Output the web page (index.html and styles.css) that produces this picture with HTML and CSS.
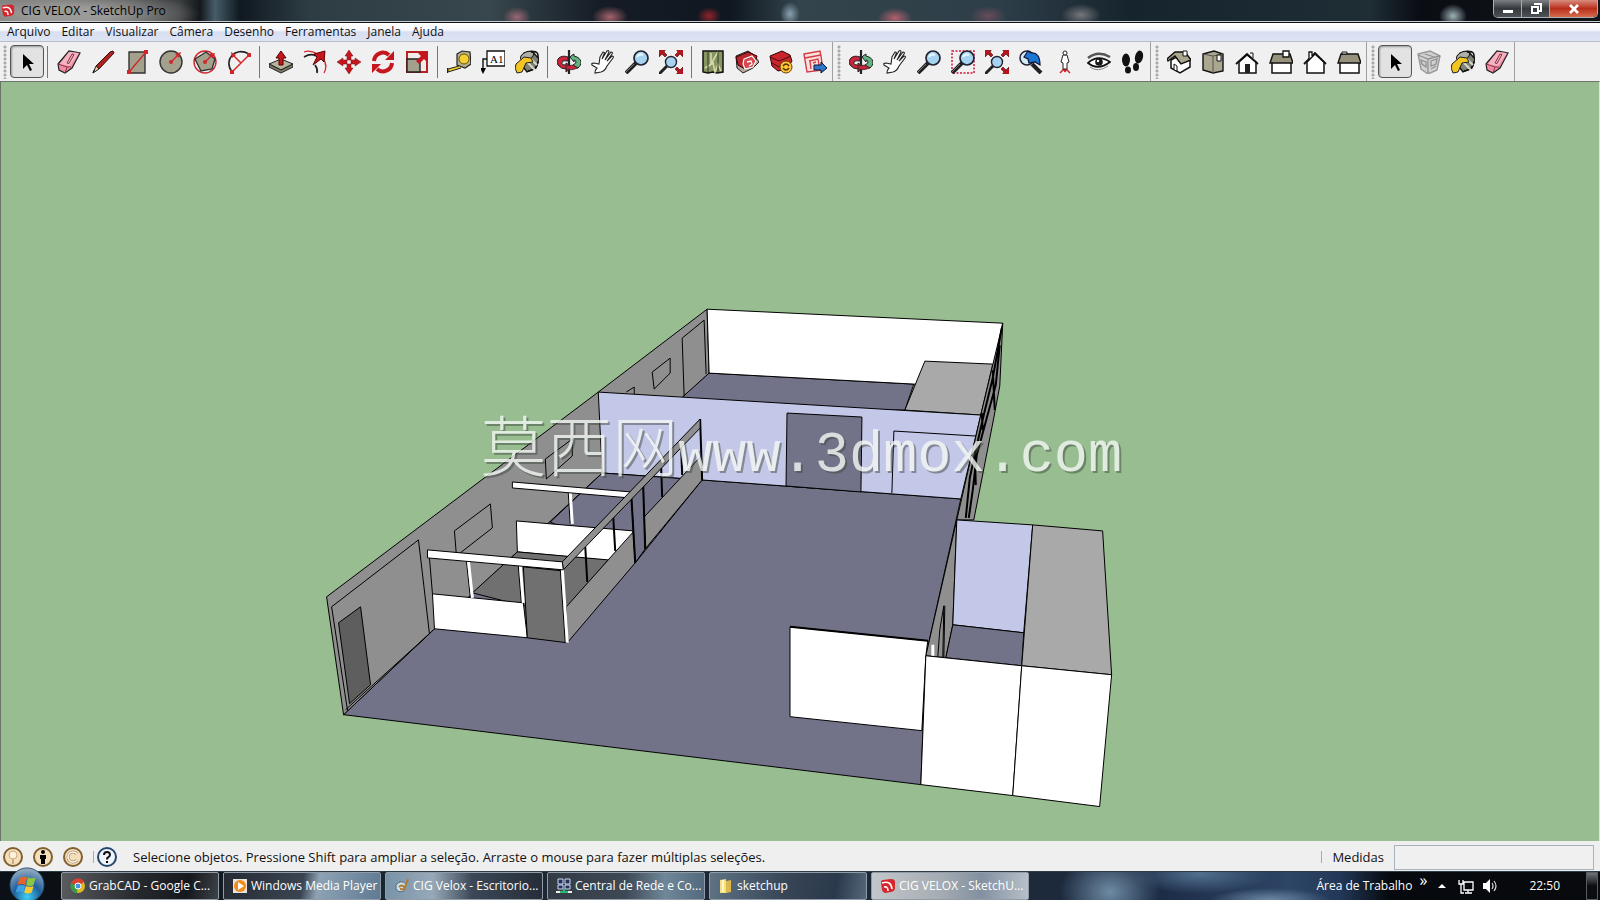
FILE: index.html
```html
<!DOCTYPE html>
<html lang="pt-BR">
<head>
<meta charset="utf-8">
<title>CIG VELOX - SketchUp Pro</title>
<link rel="stylesheet" href="styles.css">
</head>
<body>
<svg class="defs" aria-hidden="true">
  <defs>
    <symbol id="i-select" viewBox="0 0 24 24"><path d="M8 4v15l4-4 3 6 2-1-3-6h5z" fill="#000"/></symbol>
    <symbol id="i-eraser" viewBox="0 0 24 24"><path d="M1 14 12 1l11 2-8 15-7 5-6-3z" fill="#f08ca4" stroke="#222" stroke-width="1.2"/><path d="M12 2 22 3 13 16 3 14z" fill="#f7b3c2"/><path d="M1 14l9 3 4 0M10 17l-2 6" stroke="#8c3348" fill="none"/><path d="M10 13l5-9 2 .5-5 9z" fill="none" stroke="#7d3444"/></symbol>
    <symbol id="i-pencil" viewBox="0 0 24 24"><path d="M5 16 19 2l3-1 1 2-15 16z" fill="#b32020" stroke="#331010"/><path d="M5 16l3 3-6 4z" fill="#e7c9a0" stroke="#222"/><path d="M1 23l3-2-1-1z"/></symbol>
    <symbol id="i-rect" viewBox="0 0 24 24"><path d="M4 2h16v21H4z" fill="#a3a18c" stroke="#333" stroke-width="1.4"/><path d="M4 22 21 2" stroke="#d0262c" stroke-width="1.4"/><path d="M2 20h4v4H2zM19 0h4v4h-4z" fill="#d0262c"/></symbol>
    <symbol id="i-circle" viewBox="0 0 24 24"><circle cx="12" cy="12" r="11" fill="#a3a18c" stroke="#333" stroke-width="1.4"/><path d="M12 12l8-8" stroke="#d0262c" stroke-width="1.4"/><circle cx="12" cy="12" r="2" fill="#d0262c"/><path d="M22 2l-6 2 4 4z" fill="#d0262c"/></symbol>
    <symbol id="i-poly" viewBox="0 0 24 24"><circle cx="12" cy="12" r="11" fill="none" stroke="#d0262c" stroke-width="1.4"/><path d="M2 9 13 2l9 7-3 10-11 2z" fill="#a3a18c" stroke="#333" stroke-width="1.4"/><path d="M12 12l8-8" stroke="#d0262c" stroke-width="1.4"/><circle cx="12" cy="12" r="2" fill="#d0262c"/><path d="M22 3l-6 1 4 4z" fill="#d0262c"/></symbol>
    <symbol id="i-arc" viewBox="0 0 24 24"><path d="M5 22C-4 10 8-4 22 4" fill="none" stroke="#222" stroke-width="1.6"/><path d="M5 22 22 5M6 5l8 8" fill="none" stroke="#d0262c" stroke-width="1.5"/><path d="M3 20h4v4H3zM20 3h4v4h-4zM4 2l5 3-4 3z" fill="#d0262c"/></symbol>
    <symbol id="i-push" viewBox="0 0 24 24"><path d="M0 14 12 9l12 5-12 6z" fill="#b5b49e" stroke="#222"/><path d="M0 14v3l12 6 12-6v-3l-12 6z" fill="#7b7a66" stroke="#222"/><path d="M12 1l5 7h-3v7h-4V8H7z" fill="#c4161c" stroke="#500"/></symbol>
    <symbol id="i-follow" viewBox="0 0 24 24"><path d="M1 2C9-1 22 6 23 16M22 13q2 5-1 10" fill="none" stroke="#d0262c" stroke-width="1.3"/><path d="M1 7q7-4 12-1M12 15q3 4 2 8" fill="none" stroke="#222" stroke-width="1.7"/><path d="M22 1l-1 11-3-3-8 6 4-8-3-3z" fill="#c4161c" stroke="#600"/></symbol>
    <symbol id="i-move" viewBox="0 0 24 24"><path d="M12 0l4 6h-2v4h-4V6H8zM12 24l4-6h-2v-4h-4v4H8zM0 12l6-4v2h4v4H6v2L0 12zM24 12l-6-4v2h-4v4h4v2z" fill="#c4161c" stroke="#7a1014" stroke-width=".5"/></symbol>
    <symbol id="i-rotate" viewBox="0 0 24 24"><path d="M3 11a9 9 0 0 1 15-6M21 13a9 9 0 0 1-15 6" fill="none" stroke="#c4161c" stroke-width="4"/><path d="M14 10h9V1zM10 14H1v9z" fill="#c4161c"/></symbol>
    <symbol id="i-scale" viewBox="0 0 24 24"><path d="M2 2h20v20H2z" fill="#f2ece6" stroke="#b82025" stroke-width="2"/><path d="M2 9h13v13H2z" fill="#a3a18c" stroke="#222" stroke-width="1.4"/><path d="M22 2v10l-3-3-5 5-3-3 5-5-3-3z" fill="#c4161c"/></symbol>
    <symbol id="i-tape" viewBox="0 0 24 24"><path d="M10 4l5-3 8 1 1 12-6 4-8-3z" fill="#b4b08e" stroke="#222" stroke-width="1.2"/><circle cx="17" cy="9" r="5" fill="#f4cf36" stroke="#695400"/><path d="M12 16 1 19v3l13-4" fill="#f0ca25" stroke="#222"/><path d="M0 18v5" stroke="#222" stroke-width="2"/></symbol>
    <symbol id="i-text" viewBox="0 0 24 24"><path d="M6 1h18v15H6z" fill="#fff" stroke="#111" stroke-width="1.3"/><path d="M6 9H2v10" fill="none" stroke="#111" stroke-width="1.4"/><path d="M-1 18h6l-3 6z"/><text x="9" y="13" class="icon-text">A1</text></symbol>
    <symbol id="i-paint" viewBox="0 0 24 24"><path d="M9 3l8-2 7 8-3 9-9 4-6-8z" fill="#7f8174" stroke="#111" stroke-width="1.4"/><ellipse cx="12" cy="6" rx="7" ry="4" fill="#adb2a8" stroke="#111" transform="rotate(-24 12 6)"/><path d="M16 2q8-2 7 6M13 21q9-1 10-9" stroke="#111" stroke-width="1.6" fill="none"/><path d="M11 11l9 9M15 8l7 7" stroke="#d5d8cc" stroke-width="2"/><path d="M1 14 9 7l7 1 2 4-7 1-4 9-5 1q-3-5-1-9z" fill="#f2c522" stroke="#222"/></symbol>
    <symbol id="i-orbit" viewBox="0 0 24 24"><path d="M12 0v24" stroke="#222" stroke-width="2.2"/><path d="M11 7C3 4-2 10 1 15q3 4 8 4v3l6-5-6-4v2q-5 0-4-3 1-2 6-1z" fill="#c9243a" stroke="#222"/><path d="M13 7q2-2 4-3v2c9 2 8 9 4 12l-5-3q4-2 3-4l-2-1v2z" fill="#5fb580" stroke="#222"/><path d="M9 19q6 2 12-1l-5-3-7 1z" fill="#c9243a" stroke="#222" stroke-width=".7"/><path d="M12 1v10" stroke="#222" stroke-width="2"/></symbol>
    <symbol id="i-hand" viewBox="0 0 24 24"><path d="M4 23q0-3 2-5l-5-3q-1-2 2-2l5 1 1-7 3-5q2 0 1 2l-2 5 5-8q2-1 2 1l-4 8 6-8q2 0 1 2l-5 7 5-5q2 0 1 2l-6 8q-2 5-6 6z" fill="#fff" stroke="#222" stroke-width="1.1"/></symbol>
    <symbol id="i-zoom" viewBox="0 0 24 24"><path d="M1 23 11 13" stroke="#222" stroke-width="4"/><path d="M1 22l8-8" stroke="#777" stroke-width="1"/><circle cx="16" cy="8" r="7" fill="#a6d4f0" stroke="#223" stroke-width="1.7"/><path d="M12 7q2-4 6-2" stroke="#e9f8ff" stroke-width="2" fill="none"/></symbol>
    <symbol id="i-window" viewBox="0 0 24 24"><path d="M1 1h22v22H1z" fill="none" stroke="#d4153b" stroke-width="1.5" stroke-dasharray="2 1.5"/><use href="#i-zoom"/></symbol>
    <symbol id="i-extents" viewBox="0 0 24 24"><path d="M0 24l9-9" stroke="#222" stroke-width="3"/><circle cx="12" cy="12" r="5.5" fill="#a6d4f0" stroke="#223" stroke-width="1.4"/><path d="M-1-1h8L5 2l3 3-2 2-3-3-3 3zM25-1h-8l2 3-3 3 2 2 3-3 3 3zM25 25h-8l2-3-3-3 2-2 3 3 3-3z" fill="#b3161e" stroke="#400" stroke-width=".6"/></symbol>
    <symbol id="i-prev" viewBox="0 0 24 24"><circle cx="8" cy="8" r="7" fill="#d4ebf5" stroke="#223" stroke-width="1.5"/><path d="M13 14l9 9" stroke="#222" stroke-width="4"/><path d="M5 7l4-6 3 2q9-1 9 12l-5-3-6 1-1-4z" fill="#1b78d0" stroke="#113" stroke-width="1.2"/></symbol>
    <symbol id="i-person" viewBox="0 0 24 24"><path d="M7 23l4-4 1 3M17 23l-4-4-1 3M9 20h6" stroke="#d0262c" stroke-width="1.5" fill="none"/><path d="M10 5l-2 7 2 1v6h4v-6l2-1-2-7z" fill="#fff" stroke="#222"/><circle cx="12" cy="3" r="2" fill="#fff" stroke="#222"/></symbol>
    <symbol id="i-eye" viewBox="0 0 24 24"><path d="M1 8q10-8 22-1" stroke="#555" stroke-width="2.4" fill="none"/><path d="M1 13Q11 4 23 12q-12 9-22 1z" fill="#fff" stroke="#111" stroke-width="1.7"/><circle cx="12" cy="12" r="3.800" fill="#171717"/><circle cx="11" cy="11" r="1.2" fill="#fff"/><path d="M3 17q8 6 18-1" stroke="#888" fill="none"/></symbol>
    <symbol id="i-feet" viewBox="0 0 24 24"><g fill="#111"><ellipse cx="5" cy="10" rx="4" ry="6.5"/><ellipse cx="7" cy="20" rx="3" ry="3.5"/><ellipse cx="18" cy="7" rx="4" ry="6.5" transform="rotate(12 18 7)"/><ellipse cx="15" cy="17" rx="3" ry="4"/></g></symbol>
    <symbol id="i-map" viewBox="0 0 24 24"><path d="M2 1h20v21l-6 1-4-1-5 1-5-1z" fill="#879560" stroke="#111" stroke-width="1.5"/><path d="M10 3v11l7-12M4 18l8-5 2 9 3-8 3 7" stroke="#d8d9ac" stroke-width="1.5" fill="none"/><path d="M7 2v20M17 2v20" stroke="#303a23"/></symbol>
    <symbol id="i-get" viewBox="0 0 24 24"><path d="M1 6 13 1l6 4 5 7-6 6-10 5-6-5z" fill="#b7a69b" stroke="#222"/><path d="M1 7 13 2l9 4-3 10-9 3-7-4z" fill="#b8262e" stroke="#300"/><path d="M9 9l8-3 4 5-3 6-8 2-2-5z" fill="#d9484c" stroke="#fff" stroke-width="1.2"/><path d="M12 12l4-1 1 3-3 2" fill="none" stroke="#fff" stroke-width="1.3"/></symbol>
    <symbol id="i-ext" viewBox="0 0 24 24"><path d="M1 6 13 1l8 4 2 6-5 8-9 2-6-5z" fill="#c9252c" stroke="#300"/><path d="M1 7l9 4 12-5M3 13l7 4 7-4" stroke="#4a0a0d" fill="none"/><circle cx="17" cy="17" r="6" fill="#ffc83a" stroke="#664200"/><path d="M14 16q3-4 6 0M20 18q-3 4-6 0" fill="none" stroke="#553500" stroke-width="1.5"/></symbol>
    <symbol id="i-layout" viewBox="0 0 24 24"><path d="M1 4l16-3 1 5 2 14-16 2z" fill="#fbe0e0" stroke="#d23c45" stroke-width="1.4"/><path d="M2 8l16-3M6 11l9-2 1 6M7 11l1 8M10 13l3-1" fill="none" stroke="#d23c45" stroke-width="1.4"/><path d="M11 15h7v-3l6 6-6 5v-3h-7z" fill="#2b78c8" stroke="#113"/></symbol>
    <symbol id="i-iso" viewBox="0 0 24 24"><path d="M4 10v8l9 5 10-6V9L15 4z" fill="#fff" stroke="#111" stroke-width="1.5"/><path d="M0 9 8 2l10 0 6 8-10 4L8 6l-7 5z" fill="#aaa78e" stroke="#111" stroke-width="1.4"/><path d="M8 6l6 8M16 1h4v5h-4zM7 14v6l3 1v-5z" fill="#fff" stroke="#111"/></symbol>
    <symbol id="i-top" viewBox="0 0 24 24"><path d="M2 4 13 1l9 3v17l-10 2-10-3z" fill="#aaa78e" stroke="#111" stroke-width="1.4"/><path d="M2 4l10 2 10-2M12 6v17" fill="none" stroke="#555"/><path d="M16 5h4v6h-4z" fill="#fff" stroke="#111"/></symbol>
    <symbol id="i-front" viewBox="0 0 24 24"><path d="M4 12v11h17V12l-9-7z" fill="#fff" stroke="#111" stroke-width="1.5"/><path d="M1 14 12 4l11 10" fill="none" stroke="#111" stroke-width="1.8"/><path d="M10 14h5v9h-5z" fill="#222"/><path d="M15 3h3v5" fill="#fff" stroke="#111"/></symbol>
    <symbol id="i-right" viewBox="0 0 24 24"><path d="M3 12h19v11H3z" fill="#fff" stroke="#111" stroke-width="1.5"/><path d="M4 4h17l3 9H1z" fill="#96927b" stroke="#111" stroke-width="1.4"/><path d="M14 1h6v6h-6z" fill="#fff" stroke="#111" stroke-width="1.3"/></symbol>
    <symbol id="i-back" viewBox="0 0 24 24"><path d="M4 12v11h17V12l-9-8z" fill="#fff" stroke="#111" stroke-width="1.5"/><path d="M1 14 12 3l11 11" fill="none" stroke="#111" stroke-width="1.8"/><path d="M6 9V2h3v4" fill="#fff" stroke="#111" stroke-width="1.3"/></symbol>
    <symbol id="i-left" viewBox="0 0 24 24"><path d="M3 12h19v11H3z" fill="#fff" stroke="#111" stroke-width="1.5"/><path d="M4 4h17l3 9H1z" fill="#96927b" stroke="#111" stroke-width="1.4"/><path d="M5 2h5v2H5z" fill="#fff" stroke="#111"/></symbol>
    <symbol id="i-comp" viewBox="0 0 24 24"><path d="M1 4 13 1l10 5-3 14-9 4-7-5z" fill="#d2d2d2" stroke="#999" stroke-width="1.4"/><path d="M1 5l10 4 12-3M11 9v14M4 10l5 2v5l-4-3zM14 11l6-2-1 5-5 2zM14 19l5-3M8 4l9 3" fill="none" stroke="#909090" stroke-width="1.3"/></symbol>
    <symbol id="i-su" viewBox="0 0 16 16"><path d="M1 4q0-2 2-2l8-1q4 0 4 3v6q0 3-4 4l-6 1q-2 0-3-3z" fill="#d6252c"/><path d="M2 5q9-3 10 6M4 9q4-1 4 4" fill="none" stroke="#fff" stroke-width="1.6"/></symbol>
  </defs>
</svg>

<header class="titlebar">
  <svg class="app-icon"><use href="#i-su"/></svg>
  <h1 class="title">CIG VELOX - SketchUp Pro</h1>
  <div class="caption">
    <button class="cap" aria-label="Minimizar"><svg viewBox="0 0 14 12"><path d="M2 7h10v3H2z" fill="#fff"/></svg></button>
    <button class="cap" aria-label="Restaurar"><svg viewBox="0 0 14 12"><path d="M5 1h7v7h-2M3 4h6v6H3z" fill="none" stroke="#fff" stroke-width="2"/></svg></button>
    <button class="cap close" aria-label="Fechar"><svg viewBox="0 0 14 12"><path d="M3 2l8 8M11 2l-8 8" stroke="#fff" stroke-width="2.6"/></svg></button>
  </div>
</header>

<nav class="menubar">
  <button>Arquivo</button><button>Editar</button><button>Visualizar</button><button>Câmera</button><button>Desenho</button><button>Ferramentas</button><button>Janela</button><button>Ajuda</button>
</nav>

<div class="toolbars">
  <div class="group">
    <i class="grip"></i>
    <button class="tool active" aria-label="Selecionar"><svg><use href="#i-select"/></svg></button>
    <i class="sep"></i>
    <button class="tool" aria-label="Borracha"><svg><use href="#i-eraser"/></svg></button>
    <button class="tool" aria-label="Linha"><svg><use href="#i-pencil"/></svg></button>
    <button class="tool" aria-label="Retângulo"><svg><use href="#i-rect"/></svg></button>
    <button class="tool" aria-label="Círculo"><svg><use href="#i-circle"/></svg></button>
    <button class="tool" aria-label="Polígono"><svg><use href="#i-poly"/></svg></button>
    <button class="tool" aria-label="Arco"><svg><use href="#i-arc"/></svg></button>
    <i class="sep"></i>
    <button class="tool" aria-label="Empurrar/Puxar"><svg><use href="#i-push"/></svg></button>
    <button class="tool" aria-label="Siga-me"><svg><use href="#i-follow"/></svg></button>
    <button class="tool" aria-label="Mover"><svg><use href="#i-move"/></svg></button>
    <button class="tool" aria-label="Rotar"><svg><use href="#i-rotate"/></svg></button>
    <button class="tool" aria-label="Escala"><svg><use href="#i-scale"/></svg></button>
    <i class="sep"></i>
    <button class="tool" aria-label="Fita métrica"><svg><use href="#i-tape"/></svg></button>
    <button class="tool" aria-label="Texto"><svg><use href="#i-text"/></svg></button>
    <button class="tool" aria-label="Pintura"><svg><use href="#i-paint"/></svg></button>
    <i class="sep"></i>
    <button class="tool" aria-label="Órbita"><svg><use href="#i-orbit"/></svg></button>
    <button class="tool" aria-label="Panorâmica"><svg><use href="#i-hand"/></svg></button>
    <button class="tool" aria-label="Zoom"><svg><use href="#i-zoom"/></svg></button>
    <button class="tool" aria-label="Modelo centralizado"><svg><use href="#i-extents"/></svg></button>
    <i class="sep"></i>
    <button class="tool" aria-label="Adicionar local"><svg><use href="#i-map"/></svg></button>
    <button class="tool" aria-label="Obter modelos"><svg><use href="#i-get"/></svg></button>
    <button class="tool" aria-label="Extensões"><svg><use href="#i-ext"/></svg></button>
    <button class="tool" aria-label="Enviar ao LayOut"><svg><use href="#i-layout"/></svg></button>
  </div>
  <div class="group">
    <i class="grip"></i>
    <button class="tool" aria-label="Órbita"><svg><use href="#i-orbit"/></svg></button>
    <button class="tool" aria-label="Panorâmica"><svg><use href="#i-hand"/></svg></button>
    <button class="tool" aria-label="Zoom"><svg><use href="#i-zoom"/></svg></button>
    <button class="tool" aria-label="Janela de zoom"><svg><use href="#i-window"/></svg></button>
    <button class="tool" aria-label="Modelo centralizado"><svg><use href="#i-extents"/></svg></button>
    <button class="tool" aria-label="Anterior"><svg><use href="#i-prev"/></svg></button>
    <button class="tool" aria-label="Posicionar câmera"><svg><use href="#i-person"/></svg></button>
    <button class="tool" aria-label="Girar"><svg><use href="#i-eye"/></svg></button>
    <button class="tool" aria-label="Percorrer"><svg><use href="#i-feet"/></svg></button>
  </div>
  <div class="group">
    <i class="grip"></i>
    <button class="tool" aria-label="Isométrica"><svg><use href="#i-iso"/></svg></button>
    <button class="tool" aria-label="Superior"><svg><use href="#i-top"/></svg></button>
    <button class="tool" aria-label="Frontal"><svg><use href="#i-front"/></svg></button>
    <button class="tool" aria-label="Direita"><svg><use href="#i-right"/></svg></button>
    <button class="tool" aria-label="Posterior"><svg><use href="#i-back"/></svg></button>
    <button class="tool" aria-label="Esquerda"><svg><use href="#i-left"/></svg></button>
  </div>
  <div class="group">
    <i class="grip"></i>
    <button class="tool active" aria-label="Selecionar"><svg><use href="#i-select"/></svg></button>
    <button class="tool" aria-label="Criar componente"><svg><use href="#i-comp"/></svg></button>
    <button class="tool" aria-label="Pintura"><svg><use href="#i-paint"/></svg></button>
    <button class="tool" aria-label="Borracha"><svg><use href="#i-eraser"/></svg></button>
  </div>
</div>

<main class="viewport">
  <svg class="model" viewBox="0 82 1600 759" role="img" aria-label="Modelo 3D">
    <g class="edges">
      <!-- main floor and left outer wall -->
      <path class="floor" d="M343 715 434 629 602 473 702 480 961 499 926 656 921 785z"/>
      <path class="wall" d="M326 597 598 392 707 309 709 373 602 473 434 629 343 715z"/>
      <path class="line" d="M331 607 418 540 429 634M331 607 347 711M345 710 430 633"/>
      <path class="door" d="M338 623 360 607 370 685 349 704z"/>
      <path class="line" d="M454 531 490 504 492 528 456 556zM545 459 572 439 572 456 546 479z"/>
      <!-- back room -->
      <path class="floor" d="M709 373 914 384 905 410 670 408z"/>
      <path class="white" d="M707 309 1003 323 990 388 914 384 709 373z"/>
      <path class="roof" d="M925 361 993 364 981 415 905 410z"/>
      <path class="line" d="M684 396 682 338 704 320 706 374M652 372 670 358V373L654 389zM626 392 634 387V394"/>
      <!-- dividing wall -->
      <path class="lilac" d="M598 392 981 415 961 499 702 480 602 473z"/>
      <path class="floor" d="M787 413 862 417 861 492 786 486z"/>
      <path class="line" d="M976 436 894 431 892 493"/>
      <!-- second office -->
      <path class="floor" d="M550 522 602 473 702 480 635 563z"/>
      <path class="white" d="M516 521 633 531 633 563 517 552z"/>
      <path class="shade" d="M472 593 517 552 608 560 567 610 523 606z"/>
      <path class="thick" d="M585 547 587 582M613 517 615 551M661 468 662 497M681 447 682 475"/>
      <path class="line" d="M568 493 570 524"/>
      <path class="post" d="M570 493 572 524"/>
      <path class="white" d="M512 482 631 492 630 498 512 488z"/>
      <path class="wall" d="M566 607 633 532 635 563 567 643z"/>
      <path class="wall" d="M644 517 701 456 702 480 645 549z"/>
      <path class="floor" d="M631 492 643 486 645 549 635 563z"/>
      <path class="thick" d="M631 494 635 563M643 486 645 549M700 419 702 480"/>
      <path class="wall" d="M562 562 700 419 700 428 563 570z"/>
      <!-- front office -->
      <path class="line" d="M429 558 432 594"/>
      <path class="white" d="M432 594 523 603 527 638 434 629z"/>
      <path class="shade" d="M523 567 562 571 567 643 527 638z"/>
      <path class="line" d="M466 561 470 598M518 566 521 603M560 569 565 643"/>
      <path class="post" d="M468 561 472 598M520 566 523 603M562 569 567 643"/>
      <path class="white" d="M427 550 562 562 563 570 427 558z"/>
      <!-- right wall -->
      <path class="wall" d="M1003 323 1000 386 994 418 974 520 957 520 981 415z"/>
      <path class="thick" d="M1002 328 993 378 984 415 976 450 970 478 966 518M1000 345 996 385 987 418 977 455 973 490 969 518M993 370 995 410M982 413 983 430M975 450 976 485"/>
      <path class="wall" d="M957 520 953 625 946 658 926 656z"/>
      <path class="line" d="M938 657 940 630 944 606 943 658M945 606 944 658"/>
      <path class="post" d="M933 645V656"/>
      <!-- annex -->
      <path class="lilac" d="M957 520 1033 525 1024 633 953 625z"/>
      <path class="floor" d="M953 625 1024 633 1022 666 946 658z"/>
      <path class="roof" d="M1033 525 1103 531 1112 675 1022 666z"/>
      <path class="white" d="M790 627 928 641 926 656 922 731 790 717z"/>
      <path class="thick" d="M790 627 928 641"/>
      <path class="white" d="M926 656 1022 666 1013 796 921 785z"/>
      <path class="white" d="M1022 666 1112 675 1100 807 1013 796z"/>
    </g>
    <g class="watermark">
      <text class="wm-cjk" x="480" y="471">莫西网</text>
      <text class="wm-latin" x="678" y="471">www.3dmox.com</text>
    </g>
  </svg>
</main>

<footer class="statusbar">
  <button class="round" aria-label="Localização geográfica"><svg viewBox="0 0 20 20"><circle cx="10" cy="10" r="9" fill="#f4dfbd" stroke="#80602f" stroke-width="2"/><circle cx="10" cy="8" r="4" fill="#fff2dc" stroke="#cfa87c"/><path d="M10 12v5" stroke="#cfa87c" stroke-width="2"/></svg></button>
  <button class="round" aria-label="Autoria"><svg viewBox="0 0 20 20"><circle cx="10" cy="10" r="9" fill="#f4dfbd" stroke="#80602f" stroke-width="2"/><circle cx="10" cy="5" r="2"/><path d="M7 8h6v4h-1v5H8v-5H7z"/></svg></button>
  <button class="round" aria-label="Créditos"><svg viewBox="0 0 20 20"><circle cx="10" cy="10" r="9" fill="#f4dfbd" stroke="#80602f" stroke-width="2"/><path d="M14 7a5 5 0 1 0 0 6" fill="none" stroke="#b09070" stroke-width="3"/><path d="M14 7a5 5 0 1 0 0 6" fill="none" stroke="#fff8ea" stroke-width="1.5"/></svg></button>
  <span class="help">
    <i class="tick"></i>
    <button class="round" aria-label="Ajuda"><svg viewBox="0 0 20 20"><circle cx="10" cy="10" r="9" fill="#eef4fa" stroke="#23476e" stroke-width="2"/><path d="M7 8q0-3 3-3t3 3q0 1-2 2.500-1 .5-1 2" fill="none" stroke="#111" stroke-width="2"/><path d="M9 14h2v2H9z"/></svg></button>
  </span>
  <p class="hint">Selecione objetos. Pressione Shift para ampliar a seleção. Arraste o mouse para fazer múltiplas seleções.</p>
  <i class="tick"></i>
  <label class="measure" for="medidas">Medidas</label>
  <input id="medidas" type="text">
</footer>

<div class="taskbar">
  <button class="start" aria-label="Iniciar"><svg viewBox="0 0 40 36"><defs><radialGradient id="orb" cx=".5" cy=".85" r=".8"><stop offset="0" stop-color="#3fd0f5"/><stop offset=".5" stop-color="#1f5f9d"/><stop offset="1" stop-color="#8fa9bd"/></radialGradient></defs><circle cx="20" cy="19" r="18" fill="url(#orb)" stroke="#274a68"/><path d="M12 12q4-3 8-1l-2 8q-4-2-8 0z" fill="#e8622a"/><path d="M21 11q4 2 8 0l-2 8q-4 2-8 0z" fill="#8dc63f"/><path d="M10 20q4-2 8 0l-2 7q-4-2-8 0z" fill="#3fa2e6"/><path d="M19 20q4 2 8 0l-2 7q-4 2-8 0z" fill="#fdc82f"/></svg></button>
  <button class="task t1"><svg viewBox="0 0 16 16"><circle cx="8" cy="8" r="7" fill="#e0b820"/><path d="M8 8 1 6a7 7 0 0 1 13-2z" fill="#d9402f"/><path d="M8 8 1 5a7 7 0 0 0 6 10z" fill="#3d9a46"/><circle cx="8" cy="8" r="3" fill="#4c8fe0" stroke="#fff"/></svg><span>GrabCAD - Google C...</span></button>
  <button class="task t2"><svg viewBox="0 0 16 16"><path d="M1 1h14v14H1z" fill="#e9e4dc"/><circle cx="8" cy="8" r="6" fill="#f08b1c"/><path d="M6 4l6 4-6 4z" fill="#fff"/></svg><span>Windows Media Player</span></button>
  <button class="task t3"><svg viewBox="0 0 16 16"><path d="M2 7q5-6 10-1l-2 7q-6 2-8-2z" fill="#c8dfe6" stroke="#568"/><path d="M5 9q3-3 5 0t-4 2M14 1l-4 11" fill="none" stroke="#b47b30" stroke-width="2"/></svg><span>CIG Velox - Escritorio...</span></button>
  <button class="task t4"><svg viewBox="0 0 16 16"><path d="M2 1h5v5H2zM9 1h5v5H9zM2 7h5v4H2zM9 7h5v4H9z" fill="#25325c" stroke="#cbd9f5"/><path d="M1 14h14M8 11v4" stroke="#2fb573" stroke-width="2"/><path d="M0 13h4v2H0zM12 13h4v2h-4z" fill="#eee"/></svg><span>Central de Rede e Co...</span></button>
  <button class="task t5"><svg viewBox="0 0 16 16"><path d="M2 2l6-1v14H2z" fill="#f4df84"/><path d="M8 3l5-1v12l-5 1z" fill="#dcb94a"/><path d="M5 2v12" stroke="#fff6c4" stroke-width="2"/></svg><span>sketchup</span></button>
  <button class="task t6"><svg><use href="#i-su"/></svg><span>CIG VELOX - SketchU...</span></button>
  <div class="tray">
    <span class="desk">Área de Trabalho</span>
    <span class="more">»</span>
    <svg class="up" viewBox="0 0 8 6"><path d="M0 5l4-4 4 4z" fill="#fff"/></svg>
    <svg class="tray-icon" viewBox="0 0 16 16"><path d="M6 4h9v8H6zM10 12v3M7 15h7M1 2v4h4V2M3 6v9h3" fill="none" stroke="#fff" stroke-width="1.3"/></svg>
    <svg class="tray-icon" viewBox="0 0 16 16"><path d="M1 5h3l4-4v14l-4-4H1z" fill="#fff"/><path d="M10 5q2 3 0 6M12 3q4 5 0 10" fill="none" stroke="#ddd" stroke-width="1.2"/></svg>
    <time class="clock">22:50</time>
    <button class="peek" aria-label="Mostrar área de trabalho"></button>
  </div>
</div>
</body>
</html>
```

FILE: styles.css
```css
* { box-sizing: border-box; }

body {
  margin: 0;
  height: 100vh;
  display: flex;
  flex-direction: column;
  overflow: hidden;
  background: #f0f0f0;
  color: #111;
  font: 12px/16px "Open Sans", "Noto Sans", sans-serif;
}

button { font: inherit; color: inherit; border: 0; padding: 0; background: none; }
.defs { position: absolute; width: 0; height: 0; }
.icon-text { font: 11px "Liberation Serif", serif; }

/* Title bar */
.titlebar {
  flex: none;
  height: 22px;
  display: flex;
  align-items: center;
  gap: 6px;
  padding-left: 1px;
  border-bottom: 1px solid #c9ced2;
  background:
    radial-gradient(ellipse 14px 10px at 517px 17px, #9a6674, transparent),
    radial-gradient(ellipse 18px 11px at 610px 17px, #a5636c, transparent),
    radial-gradient(ellipse 12px 9px at 709px 16px, #92242a, transparent),
    radial-gradient(ellipse 10px 12px at 790px 14px, #8aa3b2, transparent),
    radial-gradient(ellipse 17px 10px at 895px 18px, #b0606c, transparent),
    radial-gradient(ellipse 18px 10px at 988px 16px, #684c5a, transparent),
    radial-gradient(ellipse 20px 11px at 1081px 15px, #77777c, transparent),
    radial-gradient(ellipse 14px 12px at 1453px 16px, #9fb2b6, transparent),
    radial-gradient(ellipse 130px 24px at 70px 14px, #9a9a98 30%, transparent),
    linear-gradient(90deg, #777 0, #3b3e3f 180px, #14181d 200px, #455c69 215px, #101820 240px, #2e3d44 310px, #38474d 490px, #151c25 600px, #0f1720 730px, #34444c 800px, #2e3e48 1000px, #16242d 1130px, #1f2d35 1370px, #0a0d13 1420px, #12161b);
}
.app-icon { width: 14px; height: 15px; }
.title { margin: 0; flex: 1; font-size: 12px; font-weight: 400; color: #000; }
.caption { display: flex; align-self: flex-start; margin-right: 2px; border: 1px solid #aab0b4; border-top: 0; border-radius: 0 0 5px 5px; overflow: hidden; }
.cap { width: 28px; height: 17px; display: grid; place-items: center; border-right: 1px solid #a4aaae; background: linear-gradient(#7c8084, #33383d 50%, #4d5358); }
.cap svg { width: 14px; height: 12px; }
.cap.close { width: 47px; border: 0; background: linear-gradient(#d78d7f, #b92e1a 50%, #d56b4d); }

/* Menu */
.menubar {
  flex: none;
  height: 20px;
  display: flex;
  align-items: center;
  gap: 11px;
  padding-left: 7px;
  border-top: 1px solid #111;
  border-bottom: 1px solid #b8bcc8;
  background: linear-gradient(#fff 0, #f5f7fc 40%, #d8dff1 50%, #dde4f4);
}

/* Toolbars */
.toolbars { flex: none; height: 39px; display: flex; background: #f0f0f0; }
.group { display: flex; align-items: center; border-right: 1px solid #a0a0a0; }
.tool { width: 34px; height: 33px; display: grid; place-items: center; }
.tool svg { width: 24px; height: 24px; overflow: visible; }
.tool.active { border: 1px solid #555; border-radius: 4px; background: #e2e2e2; box-shadow: inset 1px 1px 2px #999; }
.sep { width: 8px; height: 32px; background: linear-gradient(#777, #777) 3px 0 / 1px 100% no-repeat; }
.grip { width: 10px; height: 34px; background: radial-gradient(circle at 2px 2px, #aaa 1px, transparent 2px) 3px 0 / 4px 4px repeat-y; }
.group + .group { padding-left: 1px; }

/* Drawing area */
.viewport { flex: 1; min-height: 0; border: 1px solid #6b7468; border-bottom: 0; border-right-color: #dfe5dd; background: #98bd90; }
.model { display: block; width: 100%; height: 100%; }
.edges path { stroke: #000; stroke-width: 1; stroke-linejoin: round; }
.edges .floor { fill: #727288; }
.edges .wall { fill: #8f8f8f; }
.edges .door { fill: #5e5e5e; }
.edges .shade { fill: #707070; }
.edges .roof { fill: #a9a9a9; }
.edges .white { fill: #fff; }
.edges .lilac { fill: #c3c7e8; }
.edges .line { fill: none; }
.edges .thick { fill: none; stroke-width: 2; }
.edges .post { fill: none; stroke: #fff; stroke-width: 3; }
.watermark { fill: #f4f8f4; opacity: .8; filter: drop-shadow(2px 2px 0 rgba(60, 70, 60, .6)); }
.wm-cjk { font: 300 66px "Noto Sans CJK SC", sans-serif; }
.wm-latin { font: 57px "Liberation Mono", monospace; }

/* Status bar */
.statusbar { flex: none; height: 30px; display: flex; align-items: center; gap: 10px; padding: 2px 6px 0 3px; background: #f0efef; font-size: 13px; }
.round { width: 20px; height: 20px; }
.round svg { display: block; width: 20px; height: 20px; }
.tick { width: 1px; height: 12px; background: #aaa; }
.help { display: flex; align-items: center; gap: 3px; }
.hint { margin: 0 0 0 6px; flex: 1; white-space: nowrap; }
.statusbar input { width: 200px; height: 25px; border: 1px solid #a9b2bf; background: #f0f0f0; }

/* Taskbar */
.taskbar {
  flex: none;
  height: 29px;
  display: flex;
  gap: 4px;
  border-top: 1px solid #2c3b45;
  color: #fff;
  background:
    radial-gradient(ellipse 50px 40px at 1110px 20px, #6d8aa3, transparent),
    radial-gradient(ellipse 60px 12px at 1270px 28px, #6d88a5, transparent),
    radial-gradient(ellipse 70px 20px at 1200px 2px, #52708f, transparent),
    linear-gradient(90deg, #0a1016 0, #0a1016 60px, #1a2630 400px, #1e2a3a 1030px, #1b2a44 1150px, #2d4566 1290px, #223858 1340px, #06090e 1390px, #080a0d);
}
.start { width: 57px; height: 29px; padding-left: 8px; }
.start svg { display: block; width: 38px; height: 34px; margin-top: -5px; overflow: visible; position: relative; }
.task { flex: 0 1 158px; min-width: 0; height: 28px; display: flex; align-items: center; gap: 3px; padding: 0 8px; border: 1px solid #8f9ba6; border-radius: 2px; white-space: nowrap; }
.task svg { flex: none; width: 16px; height: 16px; }
.t1 { background: linear-gradient(100deg, #5a5c60, #25282d 50%, #15181d 80%, #3d4247); }
.t2 { background: linear-gradient(100deg, #262b33, #3a4451 50%, #8ea2b4 60%, #5f7a92); }
.t3 { background: linear-gradient(90deg, #7893a8, #97a9b8 30%, #3c4857 55%, #262d38); }
.t4 { background: linear-gradient(90deg, #333a44, #3e4956 50%, #6f8798 75%, #536a7e); }
.t5 { background: linear-gradient(100deg, #5f7385, #364455 50%, #2b394c 80%, #55687b); }
.t6 { background: linear-gradient(90deg, #c3c7cb, #a4abb2 45%, #8290a0 70%, #b7c0c9); }
.tray { margin-left: auto; display: flex; align-items: center; white-space: nowrap; }
.more { margin: 0 11px 12px 7px; font-size: 16px; }
.up { width: 8px; height: 6px; margin-right: 12px; }
.tray-icon { width: 16px; height: 16px; margin-right: 8px; }
.clock { margin: 0 26px 0 23px; }
.peek { width: 12px; height: 28px; margin-right: 2px; border: 1px solid #555b60; background: linear-gradient(#70757a, #0b0d10 50%); }
```
